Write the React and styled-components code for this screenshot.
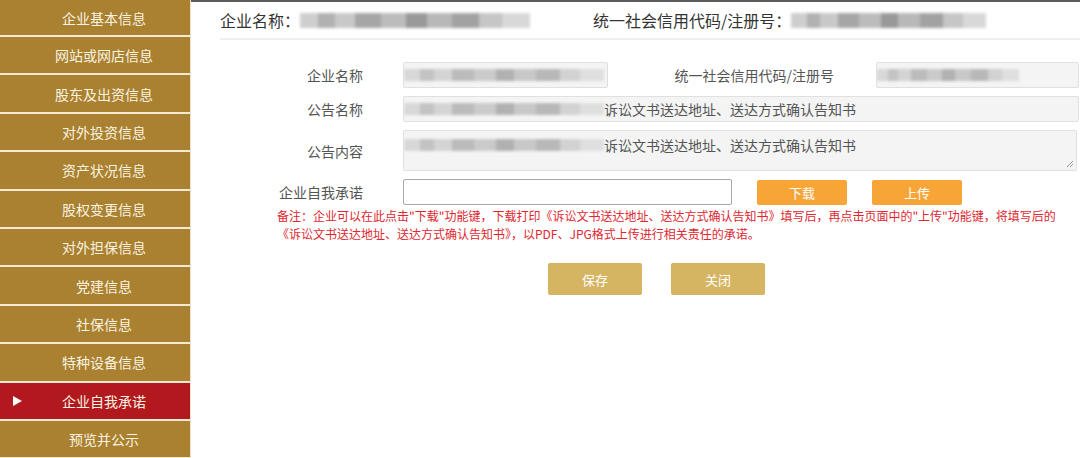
import styled, { createGlobalStyle } from "styled-components";

const GlobalStyle = createGlobalStyle`
  html, body {
    margin: 0;
    padding: 0;
    background: #fff;
  }
  body {
    font-family: "Noto Sans CJK SC", "Liberation Sans", sans-serif;
  }
`;

const Page = styled.div`
  display: flex;
  width: 1080px;
  height: 458px;
  overflow: hidden;
`;

const Sidebar = styled.ul`
  list-style: none;
  margin: 0;
  padding: 0;
  width: 190px;
  flex-shrink: 0;
  display: flex;
  flex-direction: column;
  gap: 2px;
  background: #f4ead2;
  border-right: 1px solid #ede3cc;
`;

const NavItem = styled.li`
  position: relative;
  height: 36.4px;
  flex-shrink: 0;
  display: flex;
  align-items: center;
  justify-content: center;
  padding-left: 18px;
  background: ${({ $active }) => ($active ? "#b2191f" : "#a98130")};
  color: #fbf3e0;
  font-size: 14px;
  &:first-child {
    height: 35px;
  }
`;

const Arrow = styled.span`
  position: absolute;
  left: 13px;
  top: 50%;
  transform: translateY(-50%);
  width: 0;
  height: 0;
  border-top: 5.5px solid transparent;
  border-bottom: 5.5px solid transparent;
  border-left: 9px solid #fff;
`;

const Main = styled.div`
  flex: 1;
  border-top: 2px solid #5b5b5b;
  padding-left: 29px;
  display: flex;
  flex-direction: column;
`;

const Header = styled.div`
  height: 36px;
  display: flex;
  align-items: center;
  border-bottom: 2px solid #efefef;
  font-size: 16px;
  color: #333;
`;

const HeaderItem = styled.div`
  display: flex;
  align-items: center;
  width: ${({ $w }) => ($w ? `${$w}px` : "auto")};
`;

const Blur = styled.span`
  display: inline-block;
  flex-shrink: 0;
  width: ${({ $w }) => $w}px;
  height: ${({ $h }) => $h || 14}px;
  filter: blur(1.6px);
  background: linear-gradient(
    90deg,
    #c9c9c9 0 8%,
    #a9a9a9 8% 15%,
    #c3c3c3 15% 24%,
    #9d9d9d 24% 35%,
    #b5b5b5 35% 46%,
    #8e8e8e 46% 55%,
    #b1b1b1 55% 66%,
    #999 66% 78%,
    #c0c0c0 78% 88%,
    #d4d4d4 88% 100%
  );
  opacity: ${({ $light }) => ($light ? 0.65 : 0.9)};
`;

const Form = styled.div`
  margin-left: -29px;
  padding-top: 22px;
  display: flex;
  flex-direction: column;
  gap: 8px;
`;

const Row = styled.div`
  display: flex;
  align-items: ${({ $top }) => ($top ? "stretch" : "center")};
`;

const Label = styled.div`
  width: 172px;
  flex-shrink: 0;
  text-align: right;
  padding-right: 40px;
  font-size: 14px;
  color: #555;
  align-self: center;
`;

const MidLabel = styled.div`
  width: 268px;
  padding-right: 42px;
  box-sizing: border-box;
  text-align: right;
  font-size: 14px;
  color: #555;
`;

const Field = styled.div`
  box-sizing: border-box;
  width: ${({ $w }) => $w}px;
  height: ${({ $h }) => $h || 26}px;
  background: #f4f4f4;
  border: 1px solid #e0e0e0;
  border-radius: 2px;
  display: flex;
  align-items: ${({ $top }) => ($top ? "flex-start" : "center")};
  padding-top: ${({ $top }) => ($top ? "4px" : "0")};
  font-size: 14px;
  color: #555;
  overflow: hidden;
  position: relative;
`;

const Grip = styled.svg`
  position: absolute;
  right: 2px;
  bottom: 2px;
`;

const TextInput = styled.div`
  box-sizing: border-box;
  width: 329px;
  height: 26px;
  background: #fff;
  border: 1px solid #a9a9a9;
  border-radius: 2px;
`;

const OrangeButton = styled.button`
  width: 90px;
  height: 25px;
  margin-left: 25px;
  border: none;
  border-radius: 2px;
  background: #f8a537;
  color: #fff;
  font-family: inherit;
  font-size: 13px;
  padding: 0;
`;

const Note = styled.p`
  margin: 2px 0 0 57px;
  font-size: 12px;
  line-height: 18px;
  color: #e0262f;
  white-space: nowrap;
`;

const Actions = styled.div`
  display: flex;
  gap: 29px;
  margin: 20px 0 0 328px;
`;

const GoldButton = styled.button`
  width: 94px;
  height: 32px;
  border: none;
  border-radius: 2px;
  background: #d6b562;
  color: #fff;
  font-family: inherit;
  font-size: 13px;
  padding: 0;
`;

const navItems = [
  "企业基本信息",
  "网站或网店信息",
  "股东及出资信息",
  "对外投资信息",
  "资产状况信息",
  "股权变更信息",
  "对外担保信息",
  "党建信息",
  "社保信息",
  "特种设备信息",
  "企业自我承诺",
  "预览并公示",
];

const noticeTitle = "诉讼文书送达地址、送达方式确认告知书";

export default function App() {
  return (
    <>
      <GlobalStyle />
      <Page>
        <Sidebar>
          {navItems.map((item) => (
            <NavItem key={item} $active={item === "企业自我承诺"}>
              {item === "企业自我承诺" && <Arrow />}
              {item}
            </NavItem>
          ))}
        </Sidebar>
        <Main>
          <Header>
            <HeaderItem $w={373}>
              企业名称：
              <Blur $w={230} $h={15} />
            </HeaderItem>
            <HeaderItem>
              统一社会信用代码/注册号：
              <Blur $w={195} $h={15} />
            </HeaderItem>
          </Header>
          <Form>
            <Row>
              <Label>企业名称</Label>
              <Field $w={205}>
                <Blur $w={200} $h={12} $light />
              </Field>
              <MidLabel>统一社会信用代码/注册号</MidLabel>
              <Field $w={203}>
                <Blur $w={142} $h={12} $light />
              </Field>
            </Row>
            <Row>
              <Label>公告名称</Label>
              <Field $w={676}>
                <Blur $w={200} $h={12} $light />
                <span>{noticeTitle}</span>
              </Field>
            </Row>
            <Row $top>
              <Label>公告内容</Label>
              <Field $w={674} $h={41} $top>
                <Blur $w={200} $h={12} $light style={{ marginTop: 4 }} />
                <span>{noticeTitle}</span>
                <Grip width="8" height="8" viewBox="0 0 8 8">
                  <path d="M7 1L1 7M7 4L4 7" stroke="#9a9a9a" strokeWidth="1" />
                </Grip>
              </Field>
            </Row>
            <Row>
              <Label>企业自我承诺</Label>
              <TextInput />
              <OrangeButton>下载</OrangeButton>
              <OrangeButton>上传</OrangeButton>
            </Row>
          </Form>
          <Note>
            备注：企业可以在此点击"下载"功能键，下载打印《诉讼文书送达地址、送达方式确认告知书》填写后，再点击页面中的"上传"功能键，将填写后的
            <br />
            《诉讼文书送达地址、送达方式确认告知书》，以PDF、JPG格式上传进行相关责任的承诺。
          </Note>
          <Actions>
            <GoldButton>保存</GoldButton>
            <GoldButton>关闭</GoldButton>
          </Actions>
        </Main>
      </Page>
    </>
  );
}
